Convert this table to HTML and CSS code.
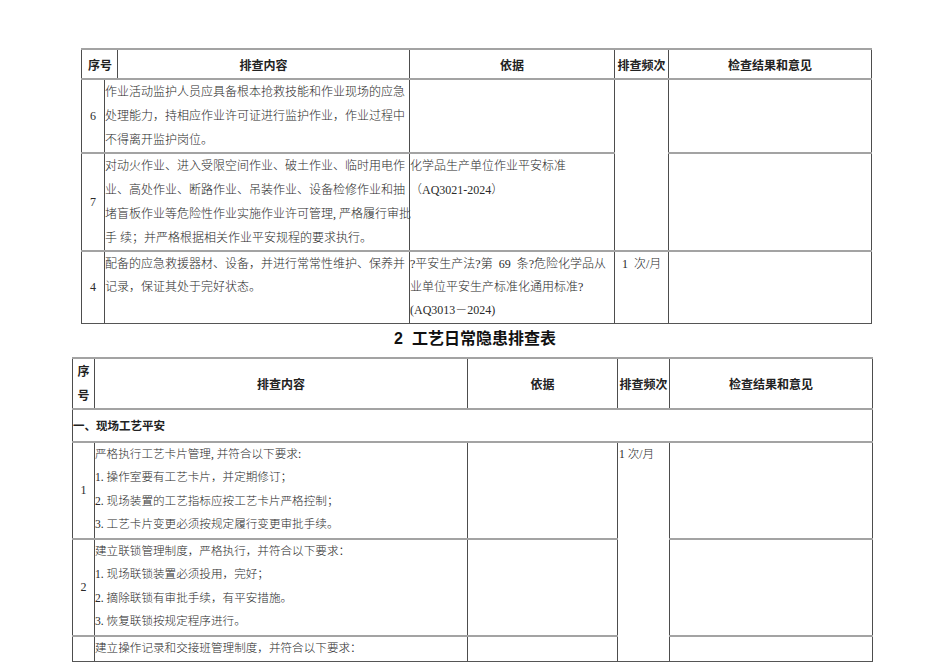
FILE: index.html
```html
<!DOCTYPE html>
<html lang="zh-CN">
<head>
<meta charset="utf-8">
<title>隐患排查表</title>
<link rel="stylesheet" href="styles.css">
</head>
<body>
<div class="page">
  <table class="sheet sheet-one">
    <colgroup>
      <col class="c-a"><col class="c-b"><col class="c-c"><col class="c-d"><col class="c-e"><col class="c-f">
    </colgroup>
    <tr class="head-row">
      <th colspan="2" class="h-num">序号</th>
      <th>排查内容</th>
      <th>依据</th>
      <th>排查频次</th>
      <th>检查结果和意见</th>
    </tr>
    <tr class="r6">
      <td class="num">6</td>
      <td colspan="2" class="txt">作业活动监护人员应具备根本抢救技能和作业现场的应急<br>处理能力，持相应作业许可证进行监护作业，作业过程中<br>不得离开监护岗位。</td>
      <td class="txt"></td>
      <td rowspan="2" class="txt"></td>
      <td class="txt"></td>
    </tr>
    <tr class="r7">
      <td class="num">7</td>
      <td colspan="2" class="txt">对动火作业、进入受限空间作业、破土作业、临时用电作<br>业、高处作业、断路作业、吊装作业、设备检修作业和抽<br>堵盲板作业等危险性作业实施作业许可管理, 严格履行审批<br>手 续；并严格根据相关作业平安规程的要求执行。</td>
      <td class="txt">化学品生产单位作业平安标准<br>（AQ3021-2024）</td>
      <td class="txt"></td>
    </tr>
    <tr class="r4">
      <td class="num">4</td>
      <td colspan="2" class="txt tight">配备的应急救援器材、设备，并进行常常性维护、保养并<br>记录，保证其处于完好状态。</td>
      <td class="txt tight">?平安生产法?第&nbsp; 69&nbsp; 条?危险化学品从<br>业单位平安生产标准化通用标准?<br>(AQ3013－2024)</td>
      <td class="txt tight freq1">1&nbsp;&nbsp;次/月</td>
      <td class="txt"></td>
    </tr>
  </table>

  <h2 class="title">2&nbsp; 工艺日常隐患排查表</h2>

  <table class="sheet sheet-two">
    <colgroup>
      <col class="d-a"><col class="d-b"><col class="d-c"><col class="d-d"><col class="d-e">
    </colgroup>
    <tr class="head-row2">
      <th class="h-num2">序<br>号</th>
      <th>排查内容</th>
      <th>依据</th>
      <th>排查频次</th>
      <th>检查结果和意见</th>
    </tr>
    <tr class="sec">
      <td colspan="5" class="sec-cell">一、现场工艺平安</td>
    </tr>
    <tr class="s1">
      <td class="num">1</td>
      <td class="txt2">严格执行工艺卡片管理, 并符合以下要求:<br>1. 操作室要有工艺卡片，并定期修订；<br>2. 现场装置的工艺指标应按工艺卡片严格控制；<br>3. 工艺卡片变更必须按规定履行变更审批手续。</td>
      <td class="txt2"></td>
      <td rowspan="3" class="txt2 freq2">1 次/月</td>
      <td class="txt2"></td>
    </tr>
    <tr class="s2">
      <td class="num">2</td>
      <td class="txt2">建立联锁管理制度，严格执行，并符合以下要求：<br>1. 现场联锁装置必须投用，完好；<br>2. 摘除联锁有审批手续，有平安措施。<br>3. 恢复联锁按规定程序进行。</td>
      <td class="txt2"></td>
      <td class="txt2"></td>
    </tr>
    <tr class="s3">
      <td class="num"></td>
      <td class="txt2">建立操作记录和交接班管理制度，并符合以下要求：</td>
      <td class="txt2"></td>
      <td class="txt2"></td>
    </tr>
  </table>
</div>
</body>
</html>
```

FILE: styles.css
```css
html, body {
  margin: 0;
  padding: 0;
  background: #ffffff;
}

.page {
  padding-top: 48px;
  color: #2a2a2a;
  font-family: "Liberation Serif", "Noto Sans CJK SC", serif;
}

.sheet {
  border-collapse: collapse;
  table-layout: fixed;
}

.sheet th,
.sheet td {
  padding: 0;
  border-left: 1px solid #4d4d4d;
  border-right: 1px solid #4d4d4d;
  border-top: 2px solid #a3a3a3;
  border-bottom: 1px solid #555555;
}

.sheet th {
  font-family: "Noto Sans CJK SC", sans-serif;
  font-weight: 700;
  font-size: 12px;
  color: #222;
  text-align: center;
  vertical-align: middle;
}

.sheet-one {
  margin-left: 81px;
  width: 790px;
}

.c-a { width: 23px; }
.c-b { width: 13px; }
.c-c { width: 292px; }
.c-d { width: 205px; }
.c-e { width: 54px; }
.c-f { width: 203px; }

.head-row { height: 30px; }
.sheet th.h-num { text-align: left; padding-left: 6px; }
.r6 { height: 74px; }
.r7 { height: 97px; }
.r4 { height: 72px; }

.num {
  text-align: center;
  vertical-align: middle;
  font-size: 12px;
  font-weight: 300;
}

.txt {
  vertical-align: top;
  font-size: 12px;
  line-height: 24px;
  font-weight: 300;
  white-space: nowrap;
  padding: 0 0 0 1px;
}

.sheet td.tight {
  line-height: 23px;
  padding-top: 1px;
}

.sheet td.freq1 { padding-left: 7px; }

.title {
  margin: 0 0 3px 0;
  height: 30px;
  line-height: 30px;
  text-align: center;
  font-family: "Liberation Sans", "Noto Sans CJK SC", sans-serif;
  font-size: 16px;
  font-weight: 700;
  color: #111;
}

.sheet-two {
  margin-left: 72px;
  width: 800px;
}

.d-a { width: 22px; }
.d-b { width: 373px; }
.d-c { width: 150px; }
.d-d { width: 52px; }
.d-e { width: 203px; }

.head-row2 { height: 51px; }
.h-num2 { line-height: 24px; }
.sec { height: 33px; }
.s1 { height: 97px; }
.s2 { height: 97px; }
.s3 { height: 26px; }

.sec-cell {
  font-family: "Noto Sans CJK SC", sans-serif;
  font-weight: 700;
  font-size: 11.5px;
  color: #222;
  vertical-align: middle;
  padding-left: 1px;
}

.txt2 {
  vertical-align: top;
  font-size: 11.6px;
  line-height: 23.6px;
  font-weight: 300;
  white-space: nowrap;
  padding: 0 0 0 2px;
}

.sheet td.freq2 { padding-left: 1px; }
```
